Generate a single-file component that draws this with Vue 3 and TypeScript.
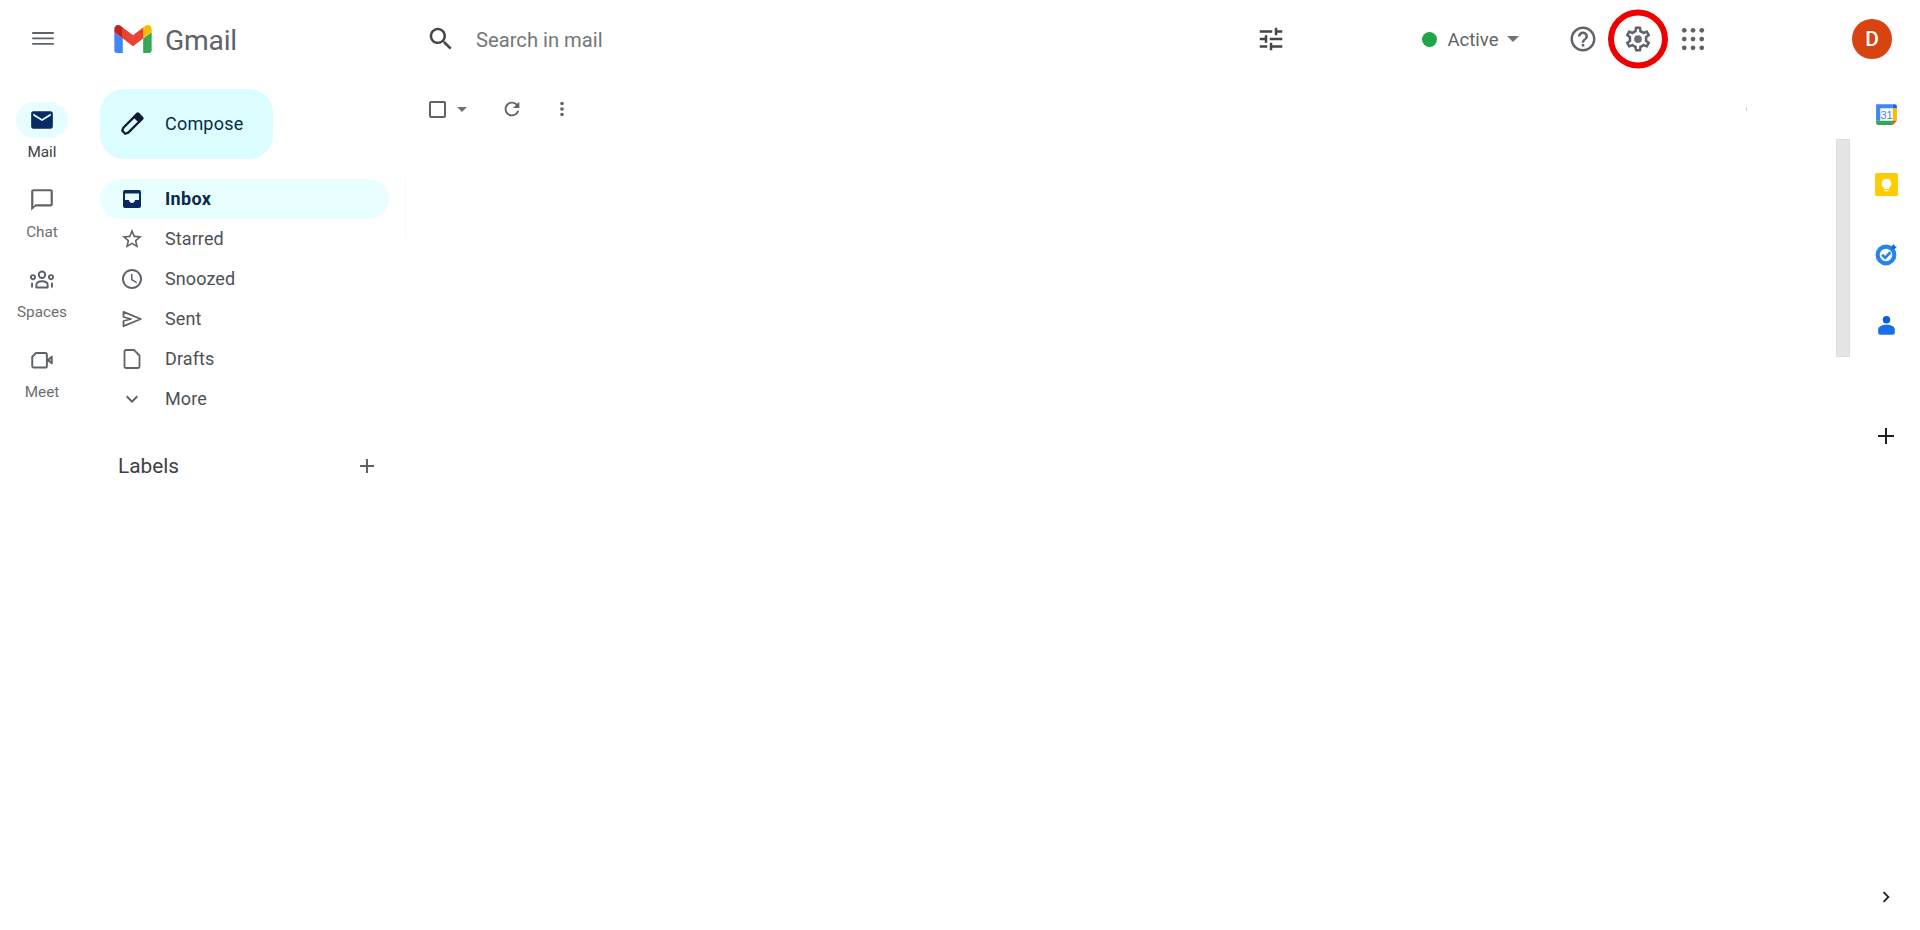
<script setup lang="ts">
interface NavItem { label: string; path: string; active?: boolean; line?: boolean }
const p = {
  mail: 'M20 4H4c-1.1 0-2 .9-2 2v12c0 1.1.9 2 2 2h16c1.1 0 2-.9 2-2V6c0-1.1-.9-2-2-2zm0 4l-8 5-8-5V6l8 5 8-5v2z',
  chat: 'M20 2H4c-1.1 0-2 .9-2 2v18l4-4h14c1.1 0 2-.9 2-2V4c0-1.1-.9-2-2-2zm0 14H6l-2 2V4h16v12z',
  meet: 'M6.5 5.5H15a1.5 1.5 0 0 1 1.5 1.5v10.5A1.5 1.5 0 0 1 15 19H4.5A1.5 1.5 0 0 1 3 17.5V9zM17.5 12l3.5-3v6z',
  spaces: 'M15 7.2a3 3 0 1 1-6 0 3 3 0 0 1 6 0zM5.6 9.4a1.9 1.9 0 1 1-3.8 0 1.9 1.9 0 0 1 3.8 0zM22.2 9.4a1.9 1.9 0 1 1-3.8 0 1.9 1.9 0 0 1 3.8 0zM6.8 19v-2.6c0-2.2 2.4-3.3 5.2-3.3s5.2 1.1 5.2 3.3V19zM2.8 14.5V19M21.2 14.5V19',
  star: 'M22 9.24l-7.19-.62L12 2 9.19 8.63 2 9.24l5.46 4.73L5.82 21 12 17.27 18.18 21l-1.63-7.03L22 9.24zM12 15.4l-3.76 2.27 1-4.28-3.32-2.88 4.38-.38L12 6.1l1.71 4.04 4.38.38-3.32 2.88 1 4.28L12 15.4z',
  clock: 'M11.99 2C6.47 2 2 6.48 2 12s4.47 10 9.99 10C17.52 22 22 17.52 22 12S17.52 2 11.99 2zM12 20c-4.42 0-8-3.58-8-8s3.58-8 8-8 8 3.58 8 8-3.58 8-8 8zm.5-13H11v6l5.25 3.15.75-1.23-4.5-2.67z',
  send: 'M3.5 4.8 20.8 12 3.5 19.2V14L11 12 3.5 10z',
  draft: 'M6 3h8l5.5 5.5V19.5A1.5 1.5 0 0 1 18 21H6a1.5 1.5 0 0 1-1.5-1.5v-15A1.5 1.5 0 0 1 6 3z',
  more: 'M16.59 8.59L12 13.17 7.41 8.59 6 10l6 6 6-6z',
  inbox: 'M19 3H5c-1.1 0-2 .9-2 2v14c0 1.1.9 2 2 2h14c1.1 0 2-.9 2-2V5c0-1.1-.9-2-2-2zm0 10h-4c0 1.66-1.35 3-3 3s-3-1.34-3-3H5V6.5h14V13z',
}
const rail: NavItem[] = [
  { label: 'Mail', path: p.mail, active: true },
  { label: 'Chat', path: p.chat },
  { label: 'Spaces', path: p.spaces, line: true },
  { label: 'Meet', path: p.meet, line: true },
]
const nav: NavItem[] = [
  { label: 'Inbox', path: p.inbox, active: true },
  { label: 'Starred', path: p.star },
  { label: 'Snoozed', path: p.clock },
  { label: 'Sent', path: p.send, line: true },
  { label: 'Drafts', path: p.draft, line: true },
  { label: 'More', path: p.more },
]
const dots = [5, 12, 19].flatMap((y) => [5, 12, 19].map((x) => ({ x, y })))
</script>

<template>
  <div class="app">
    <header class="header">
      <div class="menu">
        <svg width="24" height="24" viewBox="0 0 24 24"><path fill="#5f6368" d="M0 5h24v2H0zM0 11h24v2H0zM0 17h24v2H0z" transform="translate(1.2 .6) scale(.9)"/></svg>
      </div>
      <div class="brand">
        <svg width="38" height="28" viewBox="52 42 88 66">
          <path fill="#4285f4" d="M58 108h14V74L52 59v43c0 3.32 2.69 6 6 6"/>
          <path fill="#34a853" d="M120 108h14c3.32 0 6-2.69 6-6V59l-20 15"/>
          <path fill="#fbbc04" d="M120 48v26l20-15v-8c0-7.42-8.47-11.65-14.4-7.2"/>
          <path fill="#ea4335" d="M72 74V48l24 18 24-18v26L96 92"/>
          <path fill="#c5221f" d="M52 51v8l20 15V48l-5.6-4.2c-5.94-4.45-14.4-.22-14.4 7.2"/>
        </svg>
        <span class="brand-name">Gmail</span>
      </div>
      <div class="search">
        <svg width="30" height="30" viewBox="0 0 24 24"><path fill="#444746" d="M15.5 14h-.79l-.28-.27C15.41 12.59 16 11.11 16 9.5 16 5.91 13.09 3 9.5 3S3 5.91 3 9.5 5.91 16 9.5 16c1.61 0 3.09-.59 4.23-1.57l.27.28v.79l5 4.99L20.49 19l-4.99-5zm-6 0C7.01 14 5 11.99 5 9.5S7.01 5 9.5 5 14 7.01 14 9.5 11.99 14 9.5 14z"/></svg>
        <span class="search-text">Search in mail</span>
      </div>
      <div class="tune">
        <svg width="30" height="30" viewBox="0 0 24 24"><path fill="#444746" d="M3 17v2h6v-2H3zM3 5v2h10V5H3zm10 16v-2h8v-2h-8v-2h-2v6h2zM7 9v2H3v2h4v2h2V9H7zm14 4v-2H11v2h10zm-6-4h2V7h4V5h-4V3h-2v6z"/></svg>
      </div>
      <div class="status">
        <span class="dot"></span>
        <span class="status-text">Active</span>
        <span class="caret status-caret"></span>
      </div>
      <div class="tool help">
        <svg width="30" height="30" viewBox="0 0 24 24"><path fill="#5f6368" d="M11 18h2v-2h-2v2zm1-16C6.48 2 2 6.48 2 12s4.48 10 10 10 10-4.48 10-10S17.52 2 12 2zm0 18c-4.41 0-8-3.59-8-8s3.59-8 8-8 8 3.59 8 8-3.59 8-8 8zm0-14c-2.21 0-4 1.79-4 4h2c0-1.1.9-2 2-2s2 .9 2 2c0 2-3 1.75-3 5h2c0-2.25 3-2.5 3-5 0-2.21-1.79-4-4-4z"/></svg>
      </div>
      <div class="tool gear">
        <svg width="30" height="30" viewBox="0 0 24 24"><path fill="#5f6368" d="M19.43 12.98c.04-.32.07-.64.07-.98 0-.34-.03-.66-.07-.98l2.11-1.65c.19-.15.24-.42.12-.64l-2-3.46c-.09-.16-.26-.25-.44-.25-.06 0-.12.01-.17.03l-2.49 1c-.52-.4-1.08-.73-1.69-.98l-.38-2.65C14.46 2.18 14.25 2 14 2h-4c-.25 0-.46.18-.49.42l-.38 2.65c-.61.25-1.17.59-1.69.98l-2.49-1c-.06-.02-.12-.03-.18-.03-.17 0-.34.09-.43.25l-2 3.46c-.13.22-.07.49.12.64l2.11 1.65c-.04.32-.07.65-.07.98 0 .33.03.66.07.98l-2.11 1.65c-.19.15-.24.42-.12.64l2 3.46c.09.16.26.25.44.25.06 0 .12-.01.17-.03l2.49-1c.52.4 1.08.73 1.69.98l.38 2.65c.03.24.24.42.49.42h4c.25 0 .46-.18.49-.42l.38-2.65c.61-.25 1.17-.59 1.69-.98l2.49 1c.06.02.12.03.18.03.17 0 .34-.09.43-.25l2-3.46c.12-.22.07-.49-.12-.64l-2.11-1.65zm-1.98-1.71c.04.31.05.52.05.73 0 .21-.02.43-.05.73l-.14 1.13.89.7 1.08.84-.7 1.21-1.27-.51-1.04-.42-.9.68c-.43.32-.84.56-1.25.73l-1.06.43-.16 1.13-.2 1.35h-1.4l-.19-1.35-.16-1.13-1.06-.43c-.43-.18-.83-.41-1.23-.71l-.91-.7-1.06.43-1.27.51-.7-1.21 1.08-.84.89-.7-.14-1.13c-.03-.31-.05-.54-.05-.74s.02-.43.05-.73l.14-1.13-.89-.7-1.08-.84.7-1.21 1.27.51 1.04.42.9-.68c.43-.32.84-.56 1.25-.73l1.06-.43.16-1.13.2-1.35h1.39l.19 1.35.16 1.13 1.06.43c.43.18.83.41 1.23.71l.91.7 1.06-.43 1.27-.51.7 1.21-1.07.85-.89.7.14 1.13z"/><circle cx="12" cy="12" r="3.1" fill="#6b6f73"/></svg>
        <span class="ring"></span>
      </div>
      <div class="tool apps">
        <svg width="30" height="30" viewBox="0 0 24 24"><circle v-for="d in dots" :key="`${d.x}-${d.y}`" :cx="d.x" :cy="d.y" r="1.9" fill="#5f6368"/></svg>
      </div>
      <div class="avatar">D</div>
    </header>

    <div class="body">
      <nav class="rail">
        <div v-for="item in rail" :key="item.label" class="rail-item" :class="{ on: item.active }">
          <span class="rail-pill">
            <svg width="26" height="26" viewBox="0 0 24 24" :class="{ line: item.line }"><path :d="item.path"/></svg>
          </span>
          <span class="rail-label">{{ item.label }}</span>
        </div>
      </nav>

      <aside class="side">
        <div class="compose">
          <svg width="28" height="28" viewBox="0 0 24 24">
            <g transform="rotate(45 12 12)">
              <path fill="none" stroke="#0b1c33" stroke-width="2" stroke-linejoin="round" d="M9 6v13.5l1.2 2.5h3.6l1.2-2.5V6z"/>
              <rect x="8" y="1" width="8" height="6" rx="1.5" fill="#0b1c33"/>
            </g>
          </svg>
          <span class="compose-text">Compose</span>
        </div>
        <ul class="nav">
          <li v-for="item in nav" :key="item.label" class="row" :class="{ on: item.active }">
            <svg width="24" height="24" viewBox="0 0 24 24" :class="{ line: item.line }"><path :d="item.path"/></svg>
            <span class="row-text">{{ item.label }}</span>
          </li>
        </ul>
        <div class="labels">
          <span>Labels</span>
          <svg width="24" height="24" viewBox="0 0 24 24"><path fill="#5f6368" d="M19 13h-6v6h-2v-6H5v-2h6V5h2v6h6z"/></svg>
        </div>
      </aside>

      <main class="main">
        <div class="content">
          <div class="toolbar">
            <span class="check"></span>
            <span class="caret tool-caret"></span>
            <svg class="refresh" width="22" height="22" viewBox="0 0 24 24"><path fill="#5f6368" d="M17.65 6.35C16.2 4.9 14.21 4 12 4c-4.42 0-7.99 3.58-7.99 8s3.57 8 7.99 8c3.73 0 6.84-2.55 7.73-6h-2.08c-.82 2.33-3.04 4-5.65 4-3.31 0-6-2.69-6-6s2.69-6 6-6c1.66 0 3.14.69 4.22 1.78L13 11h7V4l-2.35 2.35z"/></svg>
            <svg class="kebab" width="22" height="22" viewBox="0 0 24 24"><path fill="#5f6368" d="M12 8a2 2 0 1 0 0-4 2 2 0 0 0 0 4zm0 2a2 2 0 1 0 0 4 2 2 0 0 0 0-4zm0 6a2 2 0 1 0 0 4 2 2 0 0 0 0-4z"/></svg>
            <span class="tick"></span>
          </div>
        </div>
        <div class="thumb"></div>
      </main>

      <aside class="addons">
        <div class="addon">
          <svg width="25" height="25" viewBox="0 -1 24 24">
            <path fill="#fff" d="M6 6h12v12H6z"/>
            <path fill="#4285f4" d="M2 2h16v4H6v12H2z"/>
            <path fill="#fbbc04" d="M18 6h4v12h-4z"/>
            <path fill="#34a853" d="M2 18h16v4H4a2 2 0 0 1-2-2z"/>
            <path fill="#ea4335" d="M18 18h4l-4 4z"/>
            <path fill="#1967d2" d="M18 2h2a2 2 0 0 1 2 2v2h-4z"/>
            <text x="12" y="15.9" text-anchor="middle" class="cal">31</text>
          </svg>
        </div>
        <div class="addon">
          <svg width="25" height="25" viewBox="0 0 24 24">
            <rect x="1" y="1" width="22" height="22" rx="1.5" fill="#ffcc00"/>
            <path fill="#fff" d="M12 6.5a4.6 4.6 0 0 0-2.5 8.5v1.3h5V15A4.6 4.6 0 0 0 12 6.5zM10 17.2h4v1.3h-4z"/>
          </svg>
        </div>
        <div class="addon">
          <svg width="25" height="25" viewBox="0 1 24 24">
            <circle cx="11.5" cy="12.5" r="8" fill="none" stroke="#2684ec" stroke-width="4"/>
            <path fill="none" stroke="#2684ec" stroke-width="2.6" d="M7.8 12.3l3 3 5-5.4"/>
            <path fill="#1967d2" d="M19 2l1 2 2 .5-2.5 2.5-2.4-.3-.4-2.3z"/>
          </svg>
        </div>
        <div class="addon">
          <svg width="25" height="25" viewBox="0 1 24 24">
            <circle cx="12" cy="6.5" r="3.6" fill="#0b5fe0"/>
            <path fill="#1a6fe8" d="M4 19v-3c0-3 3.5-4.6 8-4.6s8 1.6 8 4.6v3a2 2 0 0 1-2 2H6a2 2 0 0 1-2-2z"/>
          </svg>
        </div>
        <div class="plus">
          <svg width="24" height="24" viewBox="0 0 24 24"><path fill="#202124" d="M20 13h-7v7h-2v-7H4v-2h7V4h2v7h7z"/></svg>
        </div>
        <div class="chev">
          <svg width="22" height="22" viewBox="0 0 24 24"><path fill="#202124" d="M10 6L8.59 7.41 13.17 12l-4.58 4.59L10 18l6-6z"/></svg>
        </div>
      </aside>
    </div>
  </div>
</template>

<style>
html, body { margin: 0; background: #fff; }
</style>

<style scoped>
.app {
  height: 930px;
  display: flex;
  flex-direction: column;
  overflow: hidden;
  background: #fff;
  font-family: Roboto, "Liberation Sans", sans-serif;
  color: #444746;
}
.header { height: 78px; display: flex; align-items: center; flex: none; }
.menu { width: 86px; display: flex; justify-content: center; flex: none; }
.brand { width: 334px; flex: none; display: flex; align-items: center; gap: 13px; padding-left: 28px; box-sizing: border-box; }
.brand-name { font-size: 28.2px; color: #5f6368; letter-spacing: -.2px; padding-top: 2px; }
.search { width: 825px; flex: none; display: flex; align-items: center; gap: 20px; padding-left: 6px; box-sizing: border-box; }
.search-text { font-size: 20.2px; color: #74777a; padding-top: 2px; }
.tune { width: 52px; flex: none; display: flex; justify-content: center; }
.status { width: 139.5px; flex: none; margin-left: 120.5px; display: flex; align-items: center; box-sizing: border-box; padding-left: 4px; }
.dot { width: 15px; height: 15px; border-radius: 50%; background: #1fa64a; margin-right: 11px; }
.status-text { font-size: 18.5px; color: #5f6368; padding-top: 2px; }
.caret { width: 0; height: 0; border-left: 6px solid transparent; border-right: 6px solid transparent; border-top: 6px solid #6f7377; }
.status-caret { margin-left: 9px; }
.tool { width: 55px; display: flex; justify-content: center; flex: none; position: relative; }
.help { margin-left: -2px; }
.ring {
  position: absolute;
  left: 50%;
  top: 50%;
  width: 60px;
  height: 59px;
  transform: translate(-50%, -50%);
  border: 6px solid #ee0000;
  border-radius: 50%;
  box-sizing: border-box;
}
.avatar {
  width: 40px;
  height: 40px;
  margin-left: 132px;
  border-radius: 50%;
  background: #d8430f;
  color: #fff;
  font-size: 21px;
  font-weight: 500;
  display: flex;
  align-items: center;
  justify-content: center;
}
.body { flex: 1; display: flex; min-height: 0; }
.rail { width: 84px; flex: none; padding-top: 24px; display: flex; flex-direction: column; align-items: center; }
.rail-item { height: 80px; width: 84px; display: flex; flex-direction: column; align-items: center; }
.rail-pill { width: 52px; height: 36px; border-radius: 18px; display: flex; align-items: center; justify-content: center; }
.rail-pill svg { fill: #5f6368; }
.line { fill: none !important; stroke: #5f6368; stroke-width: 1.8; stroke-linejoin: round; }
.rail-item.on .rail-pill { background: #e8fdff; }
.rail-item.on .rail-pill svg { fill: #062a63; }
.rail-label { font-size: 15.3px; line-height: 20px; margin-top: 4px; color: #6b6f72; }
.rail-item.on .rail-label { color: #3c4043; }
.side { width: 305px; margin-left: 16px; flex: none; padding-top: 11px; }
.compose {
  width: 173px;
  height: 70px;
  border-radius: 24px;
  background: #dcfdff;
  display: flex;
  align-items: center;
  gap: 19px;
  padding-left: 18px;
  box-sizing: border-box;
  font-size: 18px;
  letter-spacing: .2px;
  color: #0b2a4a;
}
.compose-text { padding-bottom: 2px; }
.nav { list-style: none; margin: 20px 0 0; padding: 0; width: 289px; position: relative; }
.nav::after { content: ""; position: absolute; left: 305px; top: 0; width: 1px; height: 60px; background: #f8f8f8; }
.row {
  height: 40px;
  display: flex;
  align-items: center;
  padding-left: 20px;
  gap: 21px;
  border-radius: 20px;
  font-size: 18px;
  letter-spacing: .1px;
  color: #4d5156;
}
.row-text { padding-bottom: 2px; }
.row svg { fill: #5f6368; flex: none; }
.row.on { background: #e8feff; color: #0b2a4a; font-weight: 700; letter-spacing: .3px; }
.row.on svg { fill: #062a63; }
.labels {
  width: 289px;
  height: 40px;
  margin-top: 27px;
  padding: 0 10px 0 18px;
  box-sizing: border-box;
  display: flex;
  align-items: center;
  justify-content: space-between;
  font-size: 20.8px;
  color: #3c4043;
}
.main { flex: 1; display: flex; min-width: 0; }
.content { flex: 1; }
.toolbar { height: 62px; display: flex; align-items: center; padding-left: 24px; }
.check { width: 17px; height: 17px; border: 2px solid #5f6368; border-radius: 2px; box-sizing: border-box; }
.tool-caret { margin-left: 11px; border-left-width: 5px; border-right-width: 5px; border-top-width: 5px; }
.refresh { margin-left: 34px; }
.kebab { margin-left: 28px; }
.tick { width: 1px; height: 4px; margin-left: auto; margin-right: 89px; background: #d4d4d4; }
.thumb { width: 14px; height: 218px; margin-top: 61px; flex: none; background: #e5e5e5; border: 1px solid #dcdcdc; box-sizing: border-box; }
.addons { width: 70px; flex: none; display: flex; flex-direction: column; align-items: center; padding-left: 2px; box-sizing: border-box; }
.addon { height: 71px; display: flex; align-items: center; }
.cal { font: 500 10.5px "Liberation Sans", sans-serif; fill: #4a7fd0; }
.plus { margin-top: 62px; display: flex; }
.chev { margin-top: auto; padding-bottom: 22px; display: flex; }
</style>
